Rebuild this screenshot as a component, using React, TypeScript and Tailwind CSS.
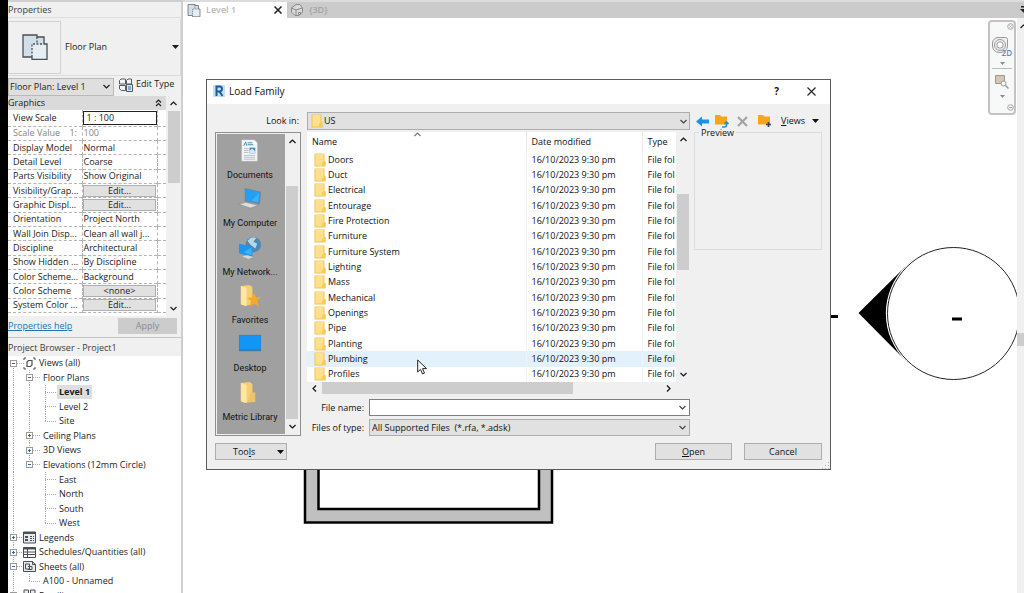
import { useState, type ReactNode } from 'react';
import { clsx } from 'clsx';

type PropertyRow = { label: string; value: string; kind?: 'input' | 'button' | 'disabled' };

const PROPERTIES: PropertyRow[] = [
  { label: 'View Scale', value: '1 : 100', kind: 'input' },
  { label: 'Scale Value    1:', value: '100', kind: 'disabled' },
  { label: 'Display Model', value: 'Normal' },
  { label: 'Detail Level', value: 'Coarse' },
  { label: 'Parts Visibility', value: 'Show Original' },
  { label: 'Visibility/Grap...', value: 'Edit...', kind: 'button' },
  { label: 'Graphic Displ...', value: 'Edit...', kind: 'button' },
  { label: 'Orientation', value: 'Project North' },
  { label: 'Wall Join Disp...', value: 'Clean all wall j...' },
  { label: 'Discipline', value: 'Architectural' },
  { label: 'Show Hidden ...', value: 'By Discipline' },
  { label: 'Color Scheme...', value: 'Background' },
  { label: 'Color Scheme', value: '<none>', kind: 'button' },
  { label: 'System Color ...', value: 'Edit...', kind: 'button' },
];

type Cell = 'line' | 'tee' | 'elbow' | 'plus' | 'minus' | 'first' | 'last' | 'none';
type TreeRow = { label: string; cells: Cell[]; icon?: 'views' | 'legend' | 'schedule' | 'sheet' | 'family'; active?: boolean };

const TREE: TreeRow[] = [
  { label: 'Views (all)', cells: ['first'], icon: 'views' },
  { label: 'Floor Plans', cells: ['line', 'minus'] },
  { label: 'Level 1', cells: ['line', 'line', 'tee'], active: true },
  { label: 'Level 2', cells: ['line', 'line', 'tee'] },
  { label: 'Site', cells: ['line', 'line', 'elbow'] },
  { label: 'Ceiling Plans', cells: ['line', 'plus'] },
  { label: '3D Views', cells: ['line', 'plus'] },
  { label: 'Elevations (12mm Circle)', cells: ['line', 'last'] },
  { label: 'East', cells: ['line', 'none', 'tee'] },
  { label: 'North', cells: ['line', 'none', 'tee'] },
  { label: 'South', cells: ['line', 'none', 'tee'] },
  { label: 'West', cells: ['line', 'none', 'elbow'] },
  { label: 'Legends', cells: ['plus'], icon: 'legend' },
  { label: 'Schedules/Quantities (all)', cells: ['plus'], icon: 'schedule' },
  { label: 'Sheets (all)', cells: ['minus'], icon: 'sheet' },
  { label: 'A100 - Unnamed', cells: ['line', 'elbow'] },
  { label: 'Families', cells: ['plus'], icon: 'family' },
];

const FOLDERS = [
  'Doors', 'Duct', 'Electrical', 'Entourage', 'Fire Protection', 'Furniture', 'Furniture System', 'Lighting',
  'Mass', 'Mechanical', 'Openings', 'Pipe', 'Planting', 'Plumbing', 'Profiles',
];

function Chevron({ dir, className }: { dir: 'up' | 'down' | 'left' | 'right'; className?: string }) {
  const d = {
    up: 'M1.5 6 L4.5 3 L7.5 6',
    down: 'M1.5 3 L4.5 6 L7.5 3',
    left: 'M6 1.5 L3 4.5 L6 7.5',
    right: 'M3 1.5 L6 4.5 L3 7.5',
  }[dir];
  return (
    <svg className={clsx('w-[9px] h-[9px] shrink-0', className)} viewBox="0 0 9 9" fill="none" stroke="currentColor" strokeWidth="1.2">
      <path d={d} />
    </svg>
  );
}

function Caret({ className = 'h-1 w-[7px]' }: { className?: string }) {
  return (
    <svg className={clsx('shrink-0', className)} viewBox="0 0 7 4" fill="currentColor">
      <path d="M0 0h7L3.5 4z" />
    </svg>
  );
}

function Folder() {
  return (
    <svg className="w-3 h-[14px] shrink-0" viewBox="0 0 12 14">
      <path d="M.5 .5h10v7.500h1v5.500H.5z" fill="#edc45c" />
      <path d="M1.500 1h8v11.500h-8z" fill="#ffe08c" />
      <path d="M8.500 9h3v4h-4z" fill="#f8cb58" />
    </svg>
  );
}

function FloorPlanIcon({ className }: { className?: string }) {
  return (
    <svg className={className} viewBox="0 0 26 26" fill="none" stroke="#4a4f55" strokeWidth="1.3">
      <path d="M1 1h14v2h8v20H1z" fill="#d3dfe8" stroke="none" />
      <path d="M10 23H1V1h14v2h7v7" />
      <path d="M10 10h15v15H10z" fill="#e4eef4" stroke="none" />
      <path d="M10 23v2.500h15V10h-3" />
      <path d="M15 3v7M10 23V10h12" strokeDasharray="2 1.500" />
    </svg>
  );
}

function TreeCell({ cell }: { cell: Cell }) {
  const box = cell === 'plus' || cell === 'minus' || cell === 'first' || cell === 'last';
  const full = cell === 'line' || cell === 'tee' || cell === 'plus' || cell === 'minus';
  return (
    <svg className="w-4 h-[15px] shrink-0" viewBox="0 0 16 15" fill="none" stroke="#a9a9a9">
      {full && <path d="M5.500 0v15" strokeDasharray="1 1" />}
      {(cell === 'elbow' || cell === 'last') && <path d="M5.500 0v8" strokeDasharray="1 1" />}
      {cell === 'first' && <path d="M5.500 8v7" strokeDasharray="1 1" />}
      {cell !== 'line' && cell !== 'none' && <path d="M5 7.500h12" strokeDasharray="1 1" />}
      {box && <rect x="2.500" y="4.500" width="6" height="6" fill="#fff" stroke="#9b9b9b" />}
      {box && <path d="M4 7.500h3" stroke="#35699b" />}
      {cell === 'plus' && <path d="M5.500 6v3" stroke="#35699b" />}
    </svg>
  );
}

function TreeIcon({ icon }: { icon: NonNullable<TreeRow['icon']> }) {
  return (
    <svg className="-ml-px w-[13px] h-[13px] shrink-0" viewBox="0 0 13 13" fill="none" stroke="#4b4f54">
      {icon === 'views' && (
        <>
          <path d="M3 1H1v2M10 1h2v2M3 12H1v-2M10 12h2v-2" />
          <path d="M4 5l1.500-1.500H9V8L7.500 9.500H4z" strokeWidth="1.200" />
        </>
      )}
      {icon === 'legend' && (
        <>
          <path d="M.5 1h12v11H.5z" fill="#e6eaee" />
          <path d="M.5 2h12" strokeWidth="2" />
          <path d="M2 6h3M2 9h3" strokeWidth="2" />
          <path d="M7 5.500h4M7 7.500h4M7 9.500h4" strokeDasharray="2 1" />
        </>
      )}
      {icon === 'schedule' && (
        <>
          <path d="M.5 1.500h12v10H.5z" fill="#fff" />
          <path d="M.5 2.500h12" strokeWidth="2" />
          <path d="M4.500 3v8M.5 6h12M.5 8.500h12" />
        </>
      )}
      {icon === 'sheet' && (
        <>
          <path d="M.5 1.500h9l3 3v7H.5z" fill="#e6eaee" />
          <path d="M9.500 1.500v3h3M2.500 9V4h4v5zM5 6.500h4v3H5" />
        </>
      )}
      {icon === 'family' && <path d="M1 1h4.500v4.500H1zM7.500 1H12v4.500H7.500zM1 7.500h4.500V12H1zM7.500 7.500H12V12H7.500z" fill="#e6eaee" />}
    </svg>
  );
}

function PropertiesPanel() {
  const [scale, setScale] = useState('1 : 100');

  return (
    <section className="shrink-0 border-b border-[#c4c4c4] pb-[2px]">
      <h2 className="h-4 border-b border-[#dedede] leading-4 text-[#3c3c3c]">Properties</h2>

      {/* Type selector */}
      <button className="mt-px flex h-[57px] w-full items-center border-b border-r border-[#dcdcdc] pr-px text-left">
        <span className="mr-1 flex h-[53px] w-[53px] items-center justify-center border border-[#d2d2d2]">
          <FloorPlanIcon className="h-[26px] w-[26px]" />
        </span>
        <span className="flex-1">Floor Plan</span>
        <Caret />
      </button>

      <div className="mt-px flex h-[19px] items-center">
        <div className="relative flex h-[18px] w-[106px] items-center">
          <select aria-label="Instance" className="h-full w-full appearance-none border border-[#b9b9b9] bg-[#dfdfdf] px-px">
            <option>Floor Plan: Level 1</option>
          </select>
          <Chevron dir="down" className="pointer-events-none absolute right-[3px]" />
        </div>
        <button className="ml-[5px] flex h-full flex-1 items-start gap-[3px] whitespace-nowrap pt-px">
          <svg className="h-[14px] w-[14px] shrink-0" viewBox="0 0 14 14" fill="#f3f3f3" stroke="#555a60">
            <path d="M2 1h4.500v5H.5V2.500zM7.500 6V2.500L9 1h3.500v5zM.5 7.500h6v5H2.500L.5 11z" />
            <path d="M7.500 6.500h6v7h-6z" fill="#d5e6f5" />
            <path d="M9 9h3M9 11h3" stroke="#3374ad" />
          </svg>
          Edit Type
        </button>
      </div>

      <div className="flex h-[220px] overflow-hidden">
        <div className="min-w-0 flex-1">
          <div className="flex h-[14px] items-center justify-between bg-[#dadada] pr-1">
            <span>Graphics</span>
            <svg className="h-2 w-[7px]" viewBox="0 0 7 8" fill="none" stroke="#222" strokeWidth="1.200">
              <path d="M1 3.500l2.500-2.500L6 3.500M1 7l2.500-2.500L6 7" />
            </svg>
          </div>
          <table className="h-[203px] w-full table-fixed border-collapse bg-white">
            <colgroup>
              <col />
              <col className="w-[75px]" />
              <col className="w-[9px]" />
            </colgroup>
            <tbody>
              {PROPERTIES.map((row) => (
                <tr key={row.label} className="border-b border-dashed border-[#b4b4b4]">
                  <th
                    scope="row"
                    className={clsx(
                      'overflow-hidden whitespace-pre border-r border-dashed border-[#b4b4b4] p-0 pl-[5px] text-left font-normal',
                      row.kind === 'disabled' && 'text-[#858585]'
                    )}
                  >
                    {row.label}
                  </th>
                  <td className={clsx('whitespace-nowrap border-r border-dashed border-[#b4b4b4] p-0', row.kind === 'disabled' && 'text-[#858585]')}>
                    {row.kind === 'input' && (
                      <input
                        aria-label={row.label}
                        value={scale}
                        onChange={(e) => setScale(e.target.value)}
                        className="block h-[14px] w-full border border-[#222] bg-white px-[3px] outline-none"
                      />
                    )}
                    {row.kind === 'button' && (
                      <button className="mx-auto block h-3 w-[73px] border border-[#b0b0b0] bg-[#e1e1e1] leading-[10px]">{row.value}</button>
                    )}
                    {(!row.kind || row.kind === 'disabled') && <span className="block px-px leading-3">{row.value}</span>}
                  </td>
                  <td className="p-0" />
                </tr>
              ))}
            </tbody>
          </table>
          <div className="h-1 bg-white" />
        </div>
        <div className="flex w-[15px] flex-col items-center justify-between bg-[#f0f0f0]">
          <Chevron dir="up" className="my-[3px]" />
          <div className="mb-auto h-[72px] w-3 bg-[#cdcdcd]" />
          <Chevron dir="down" className="mb-[3px]" />
        </div>
      </div>

      <div className="flex h-[19px] items-center justify-between pr-1">
        <a href="#help" className="text-[#2273b4] underline">Properties help</a>
        <button disabled className="h-4 w-[59px] bg-[#cccccc] text-[#8b8b8b]">Apply</button>
      </div>
    </section>
  );
}

function ProjectBrowser() {
  return (
    <section className="mt-[3px] flex min-h-0 flex-1 flex-col">
      <h2 className="h-[15px] shrink-0 leading-[14px] text-[#3c3c3c]">Project Browser - Project1</h2>
      <div className="min-h-0 flex-1 overflow-hidden bg-white">
        <ul className="flex h-[247px] flex-col">
          {TREE.map((row) => (
            <li key={row.label} className="flex min-h-0 flex-1 items-center whitespace-nowrap">
              {row.cells.map((cell, i) => (
                <TreeCell key={i} cell={cell} />
              ))}
              {row.icon && <TreeIcon icon={row.icon} />}
              <span className={clsx('ml-px px-[2px] leading-[14px]', row.active && 'bg-[#dedede] font-bold')}>{row.label}</span>
            </li>
          ))}
        </ul>
      </div>
    </section>
  );
}

function Drawing() {
  return (
    <svg className="absolute left-0 top-0 h-[575px] w-[835px]" viewBox="183 18 835 575">
      <path d="M305 400v122.500h247V400" fill="#c0c0c0" stroke="#000" strokeWidth="2.500" />
      <path d="M318.500 400v109h220.500V400" fill="#fff" stroke="#000" strokeWidth="2.500" />
      <circle cx="953.500" cy="313.500" r="66" fill="#fff" stroke="#222" />
      <path d="M858.500 313L906 266A66 66 0 0 0 906 361Z" fill="#000" />
      <path d="M830 316.500h8M952 319h10" stroke="#000" strokeWidth="3" />
    </svg>
  );
}

function NavigationBar() {
  return (
    <div className="absolute right-2 top-[2px] flex h-[95px] w-7 flex-col items-center rounded border-2 border-[#c3c3c3] bg-[#f7f8f8] text-[#8d8d8d]">
      <svg className="mt-px h-[7px] w-[7px] self-end" viewBox="0 0 7 7" fill="none" stroke="#a5a5a5">
        <circle cx="3.500" cy="3.500" r="2.800" />
        <path d="M2.500 2.500l2 2M4.500 2.500l-2 2" />
      </svg>
      <button aria-label="Steering wheel 2D" className="relative mt-[7px] h-5 w-5">
        <svg className="absolute left-0 top-0 h-4 w-4" viewBox="0 0 16 16" fill="#f0f0f0" stroke="#999">
          <path d="M6 .5h7.500a2 2 0 0 1 2 2V9a6.500 6.500 0 0 1-6.500 6.500H7A6.500 6.500 0 0 1 .5 9V6A5.500 5.500 0 0 1 6 .5z" />
          <circle cx="8" cy="8" r="5.500" />
          <circle cx="8" cy="8" r="3.200" fill="#fff" />
        </svg>
        <span className="absolute bottom-0 right-0 text-[8px] font-semibold leading-[8px] text-[#4f8fc4]">2D</span>
      </button>
      <Caret className="mt-[5px] h-[3px] w-[5px]" />
      <span className="mt-[3px] h-px w-5 bg-[#bdbdbd]" />
      <button aria-label="Zoom region" className="mt-[6px]">
        <svg className="h-[14px] w-[14px]" viewBox="0 0 14 14" fill="none" stroke="#999">
          <path d="M.5.500h9v8h-9z" fill="#d8c6b0" />
          <circle cx="8.500" cy="8.500" r="2.500" fill="#f7f8f8" />
          <path d="M10.500 10.500l3 3" strokeWidth="1.500" />
        </svg>
      </button>
      <Caret className="mt-[6px] h-[3px] w-[5px]" />
      <svg className="mb-[2px] mt-auto h-[7px] w-[7px] self-end" viewBox="0 0 7 7" fill="none" stroke="#a5a5a5">
        <circle cx="3.500" cy="3.500" r="2.800" />
        <path d="M2 3.500h3" />
      </svg>
    </div>
  );
}

const FolderBody = () => (
  <>
    <path d="M3 2l9-1 3 2v18l-8 2-4-2z" fill="#f5cf72" />
    <path d="M3 2l6 2v19l-6-2z" fill="#ffe6a3" />
  </>
);

const PLACES: { label: string; art: ReactNode }[] = [
  {
    label: 'Documents',
    art: (
      <>
        <path d="M4 1h13l3 3v19H4z" fill="#f6f8fa" stroke="#d3d8dc" strokeWidth=".5" />
        <path d="M6 7l2-4 1 4M10 4h5M10 6h6" stroke="#3c86bd" fill="none" />
        <path d="M6 10h5M6 12h5M6 14h5M6 17h12M6 19h12M6 21h12" stroke="#b3bcc4" fill="none" />
        <path d="M12 9h6v6h-6z" fill="#3a86b8" />
        <path d="M12 12l3-2 3 3v2h-6z" fill="#d8e7ee" />
      </>
    ),
  },
  {
    label: 'My Computer',
    art: (
      <>
        <path d="M7 1l17 4-1 13-16-3z" fill="#6e8797" />
        <path d="M8 2l15 3.500-1 11L8 13.500z" fill="#22a0f3" />
        <path d="M22 6l-1 10-7-1.500z" fill="#3db1ff" />
        <path d="M1 18l7-2 13 3-8 3z" fill="#dcdedf" stroke="#858b90" strokeWidth=".6" />
      </>
    ),
  },
  {
    label: 'My Network...',
    art: (
      <>
        <circle cx="16" cy="9" r="8" fill="#4d87b2" />
        <path d="M10 5q4-5 9-3l-3 4 4 2-2 5-5-4z" fill="#b9d5e6" />
        <path d="M1 8l14 3v11L1 18z" fill="#1f96e8" />
        <path d="M14 12v8l-8-3z" fill="#3db1ff" />
        <path d="M4 21l6-1 6 2-5 2z" fill="#d4d7d9" />
      </>
    ),
  },
  {
    label: 'Favorites',
    art: (
      <>
        <FolderBody />
        <path d="M17 9l1.500 5 5.500-.5-4 4 2 6-5-3-5 3 1.500-5.500-4-3.500 5-.5z" fill="#f5a929" />
      </>
    ),
  },
  {
    label: 'Desktop',
    art: (
      <>
        <path d="M1 3h23v17H1z" fill="#3f7aa4" />
        <path d="M1.500 3.500h22v14.500h-22z" fill="#1296f5" />
      </>
    ),
  },
  {
    label: 'Metric Library',
    art: (
      <>
        <FolderBody />
        <path d="M13 12h5v10l-8 .5z" fill="#edc568" />
      </>
    ),
  },
];

function LoadFamilyDialog() {
  const [fileName, setFileName] = useState('');
  const [selected, setSelected] = useState('Plumbing');

  return (
    <div
      role="dialog"
      aria-label="Load Family"
      className="absolute left-[206px] top-[79px] w-[625px] border border-[#5c5c5c] bg-[#f0f0f0] text-[9px] text-[#111]"
    >
      <header className="flex h-6 items-center bg-white pb-[2px] pl-[6px] pr-[14px] text-[10px]">
        <svg className="mr-1 h-3 w-3" viewBox="0 0 12 12">
          <path d="M0 0h12v12H0z" fill="#c5dff0" />
          <path d="M3.500 11V1.500h3a2.500 2.500 0 0 1 0 5h-3M6.500 6.500L9.500 11" fill="none" stroke="#1c5f97" strokeWidth="2" />
        </svg>
        <h1 className="flex-1">Load Family</h1>
        <button aria-label="Help" className="mr-7 font-bold leading-3">?</button>
        <button aria-label="Close">
          <svg className="h-[9px] w-[9px]" viewBox="0 0 9 9" stroke="#222" strokeWidth="1.100">
            <path d="M.5.500l8 8M8.500.500l-8 8" />
          </svg>
        </button>
      </header>

      <div className="px-2 pb-[9px] pt-2">
        {/* Location and toolbar */}
        <div className="flex items-center">
          <label htmlFor="look-in" className="w-[86px] pr-[2px] text-right">Look in:</label>
          <div className="relative ml-[6px] flex h-[18px] min-w-0 flex-1 items-center">
            <select id="look-in" className="h-full w-full appearance-none border border-[#adadad] bg-[#e1e1e1] pl-4">
              <option>US</option>
            </select>
            <span className="pointer-events-none absolute left-1"><Folder /></span>
            <Chevron dir="down" className="pointer-events-none absolute right-[2px] text-[#444]" />
          </div>
          <div className="ml-[6px] flex w-[126px] items-center">
            <button aria-label="Back">
              <svg className="h-[11px] w-[13px]" viewBox="0 0 13 11">
                <path d="M0 5.500L6 .5v3h7v4H6v3z" fill="#1595ea" />
              </svg>
            </button>
            <button aria-label="Up one level" className="ml-[6px]">
              <svg className="h-[14px] w-[14px]" viewBox="0 0 14 14">
                <path d="M0 1h5l1.500 1.500H12v8H0z" fill="#f9a51a" />
                <path d="M7 13h2.500a2 2 0 0 0 2-2V8.500M9.500 10l2-2 2 2" fill="none" stroke="#2a8dd8" strokeWidth="1.600" />
              </svg>
            </button>
            <button aria-label="Delete" className="ml-2">
              <svg className="h-[11px] w-[11px]" viewBox="0 0 11 11" stroke="#a3a3a3" strokeWidth="2.200">
                <path d="M1 1l9 9M10 1l-9 9" />
              </svg>
            </button>
            <button aria-label="New folder" className="ml-[10px]">
              <svg className="h-[14px] w-[14px]" viewBox="0 0 14 14">
                <path d="M0 1h5l1.500 1.500H12v8H0z" fill="#f9a51a" />
                <path d="M10.500 8v5M8 10.500h5" stroke="#34405c" strokeWidth="1.600" />
              </svg>
            </button>
            <button className="ml-[9px] flex flex-1 items-center justify-between pr-[3px]">
              <span><u>V</u>iews</span>
              <Caret />
            </button>
          </div>
        </div>

        <div className="mt-[2px] flex">
          {/* Places */}
          <nav className="flex h-[304px] w-[86px] shrink-0 border border-[#8f8f8f] bg-[#f0f0f0] p-px">
            <ul className="flex flex-1 flex-col bg-[#a0a0a0] py-[5px]">
              {PLACES.map((place) => (
                <li key={place.label} className="flex-1">
                  <button className="flex w-full flex-col items-center gap-[6px] whitespace-nowrap pr-[2px] font-[Roboto,sans-serif] leading-3">
                    <svg className="h-6 w-6" viewBox="0 0 25 25">{place.art}</svg>
                    {place.label}
                  </button>
                </li>
              ))}
            </ul>
            <div className="flex w-[14px] flex-col items-center">
              <Chevron dir="up" className="my-[3px]" />
              <div className="mt-[37px] w-3 flex-1 bg-[#cdcdcd]" />
              <Chevron dir="down" className="my-[3px]" />
            </div>
          </nav>

          <div className="ml-[6px] flex min-w-0 flex-1 flex-col">
            <div className="flex">
              <div className="relative min-w-0 flex-1 overflow-hidden bg-white">
                <Chevron dir="up" className="absolute left-[106px] top-[-2px] text-[#777]" />
                <table className="h-[250px] w-full table-fixed border-collapse">
                  <colgroup>
                    <col />
                    <col className="w-[116px]" />
                    <col className="w-[34px]" />
                  </colgroup>
                  <thead>
                    <tr className="h-5 text-left">
                      <th className="border-r border-[#e8e8e8] p-0 pl-[5px] font-normal">Name</th>
                      <th className="border-r border-[#e8e8e8] p-0 pl-[5px] font-normal">Date modified</th>
                      <th className="p-0 pl-[5px] font-normal">Type</th>
                    </tr>
                  </thead>
                  <tbody>
                    {FOLDERS.map((name) => (
                      <tr key={name} onClick={() => setSelected(name)} className={clsx('whitespace-nowrap leading-3', selected === name && 'bg-[#e3f1fc]')}>
                        <td className="border-r border-[#f3f3f3] p-0 pl-[7px]">
                          <span className="flex items-center gap-[2px]"><Folder />{name}</span>
                        </td>
                        <td className="border-r border-[#f3f3f3] p-0 pl-[5px]">16/10/2023 9:30 pm</td>
                        <td className="p-0 pl-[5px]">File fol</td>
                      </tr>
                    ))}
                  </tbody>
                </table>
              </div>
              <div className="flex w-[14px] flex-col items-center">
                <Chevron dir="up" className="my-[3px]" />
                <div className="mt-[47px] h-[76px] w-3 bg-[#cdcdcd]" />
                <Chevron dir="down" className="mb-[3px] mt-auto" />
              </div>
            </div>
            <div className="flex h-3 items-center pl-[3px] pr-[17px]">
              <Chevron dir="left" />
              <div className="ml-[3px] h-3 w-[251px] bg-[#cdcdcd]" />
              <Chevron dir="right" className="ml-auto" />
            </div>

            <div className="mt-[5px] flex items-center">
              <label htmlFor="file-name" className="w-[62px] pr-[5px] text-right">File name:</label>
              <div className="relative flex h-[17px] flex-1 items-center">
                <input
                  id="file-name"
                  value={fileName}
                  onChange={(e) => setFileName(e.target.value)}
                  className="h-full w-full border border-[#7f7f7f] bg-white px-[3px] outline-none"
                />
                <Chevron dir="down" className="pointer-events-none absolute right-[3px] text-[#444]" />
              </div>
            </div>
            <div className="mt-[3px] flex items-center">
              <label htmlFor="file-type" className="w-[62px] whitespace-nowrap pr-[5px] text-right">Files of type:</label>
              <div className="relative flex h-[17px] flex-1 items-center">
                <select id="file-type" className="h-full w-full appearance-none border border-[#adadad] bg-[#e1e1e1] px-[2px]">
                  <option>All Supported Files&nbsp; (*.rfa, *.adsk)</option>
                </select>
                <Chevron dir="down" className="pointer-events-none absolute right-[3px] text-[#444]" />
              </div>
            </div>
          </div>

          <fieldset className="-mt-1 ml-1 h-[122px] w-32 border border-[#dcdcdc] pl-1">
            <legend className="px-[2px] leading-[9px]">Preview</legend>
          </fieldset>
        </div>

        <div className="mt-[7px] flex">
          <button className="flex h-[17px] w-[72px] items-center justify-between border border-[#adadad] bg-[#e1e1e1] pl-[17px] pr-[2px]">
            <span>Too<u>l</u>s</span>
            <Caret />
          </button>
          <button className="ml-auto h-[17px] w-[77px] border border-[#adadad] bg-[#e1e1e1]"><u>O</u>pen</button>
          <button className="ml-3 h-[17px] w-[78px] border border-[#adadad] bg-[#e1e1e1]">Cancel</button>
        </div>
      </div>

      <svg className="absolute bottom-0 right-0 h-2 w-2" viewBox="0 0 8 8" stroke="#b5b5b5" strokeDasharray="1 2">
        <path d="M6 1.500h1M3 4.500h5M0 7.500h8" />
      </svg>
    </div>
  );
}

export default function App() {
  return (
    <div className="relative flex h-screen overflow-hidden bg-black font-['Open_Sans','Noto_Sans',sans-serif] text-[9px] leading-3 text-[#1c1c1c]">
      <aside className="ml-2 flex w-[175px] shrink-0 flex-col border-r-2 border-t-2 border-[#cfcfcf] bg-[#f0f0f0]">
        <PropertiesPanel />
        <ProjectBrowser />
      </aside>

      <main className="flex min-w-0 flex-1 flex-col bg-white">
        <div className="flex h-[18px] shrink-0 items-stretch border-t-2 border-[#dcdcdc] bg-[#cbcbcb] text-[#b9b9b9]">
          <div className="flex w-[104px] items-center bg-white pl-1 pr-[5px]">
            <FloorPlanIcon className="mr-[5px] h-[13px] w-[14px]" />
            <span className="flex-1 font-semibold">Level 1</span>
            <button aria-label="Close tab">
              <svg className="h-2 w-2" viewBox="0 0 8 8" stroke="#222" strokeWidth="1.500">
                <path d="M.5.500l7 7M7.500.500l-7 7" />
              </svg>
            </button>
          </div>
          <button className="flex items-center gap-[6px] pl-1 font-semibold text-[#a5a5a5]">
            <svg className="h-3 w-3" viewBox="0 0 12 12" fill="#d9d9d9" stroke="#8a8a8a">
              <path d="M.5 4L5 .5h4L11.500 4v4L8 11.500H4L.5 8z" />
              <path d="M.5 4L5 6l6-2M5 6v5M7.500 8.500h2v2h-2z" />
            </svg>
            {'{3D}'}
          </button>
          <svg className="ml-auto mt-1 h-2 w-1" viewBox="0 0 4 8" fill="#222">
            <path d="M1 0h3v1.500H1zM0 3h8L4 7z" />
          </svg>
        </div>
        <div className="relative min-h-0 flex-1 overflow-hidden">
          <Drawing />
          <div className="absolute inset-y-0 right-0 w-[7px] bg-[#f0f0f0]">
            <Chevron dir="up" className="ml-[2px] mt-1" />
            <div className="mt-[302px] h-[13px] bg-[#cdcdcd]" />
          </div>
          <NavigationBar />
        </div>
      </main>

      <LoadFamilyDialog />

      {/* Mouse pointer */}
      <svg className="pointer-events-none absolute left-[417px] top-[359px] h-4 w-[10px]" viewBox="0 0 10 16" fill="#fff" stroke="#222">
        <path d="M.7 1v12l2.800-2.700L5.500 15l2-.9-2-4.500h4z" />
      </svg>
    </div>
  );
}
